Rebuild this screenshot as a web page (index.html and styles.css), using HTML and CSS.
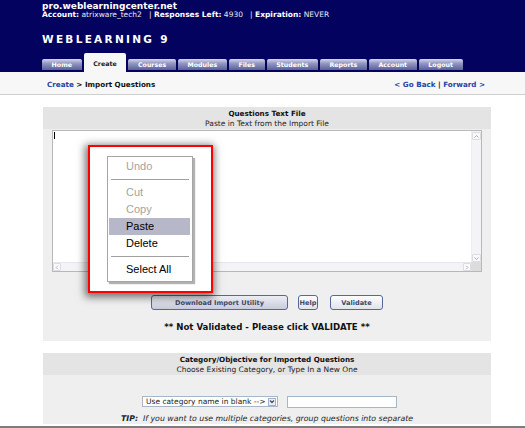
FILE: index.html
```html
<!DOCTYPE html>
<html lang="en">
<head>
<meta charset="utf-8">
<title>WebLearning 9 - Import Questions</title>
<link rel="stylesheet" href="styles.css">
</head>
<body>
<div class="window">
  <div class="page">
    <header class="masthead">
      <div class="host">pro.weblearningcenter.net</div>
      <div class="account"><b>Account:</b> atrixware_tech2 &nbsp; <span class="pipe">|</span> <b>Responses Left:</b> 4930 &nbsp; <span class="pipe">|</span> <b>Expiration:</b> NEVER</div>
      <div class="brand">WEBLEARNING 9</div>
      <nav class="tabs">
        <a class="tab">Home</a>
        <a class="tab active">Create</a>
        <a class="tab">Courses</a>
        <a class="tab">Modules</a>
        <a class="tab">Files</a>
        <a class="tab">Students</a>
        <a class="tab">Reports</a>
        <a class="tab">Account</a>
        <a class="tab">Logout</a>
      </nav>
    </header>

    <div class="crumbs">
      <div class="trail"><a class="link">Create</a> &gt; Import Questions</div>
      <div class="history"><a class="link">&lt; Go Back</a> | <a class="link">Forward &gt;</a></div>
    </div>

    <section class="panel">
      <div class="panel-head">
        <div class="panel-title">Questions Text File</div>
        <div class="panel-sub">Paste in Text from the Import File</div>
      </div>
      <div class="textbox">
        <div class="textbox-main">
          <div class="text-area"><span class="caret"></span></div>
          <div class="vscroll">
            <span class="sbtn"><svg width="7" height="7" viewBox="0 0 7 7"><polyline points="1.5,4.5 3.5,2.5 5.5,4.5" fill="none" stroke="#a9a9b6" stroke-width="1"/></svg></span>
            <span class="strack"></span>
            <span class="sbtn"><svg width="7" height="7" viewBox="0 0 7 7"><polyline points="1.5,2.5 3.5,4.5 5.5,2.5" fill="none" stroke="#a9a9b6" stroke-width="1"/></svg></span>
          </div>
        </div>
        <div class="hscroll-row">
          <div class="hscroll">
            <span class="sbtn"><svg width="7" height="7" viewBox="0 0 7 7"><polyline points="4.5,1.5 2.5,3.5 4.5,5.5" fill="none" stroke="#a9a9b6" stroke-width="1"/></svg></span>
            <span class="strack"></span>
            <span class="sbtn"><svg width="7" height="7" viewBox="0 0 7 7"><polyline points="2.5,1.5 4.5,3.5 2.5,5.5" fill="none" stroke="#a9a9b6" stroke-width="1"/></svg></span>
          </div>
          <div class="corner"></div>
        </div>
      </div>
      <div class="actions">
        <button class="btn btn-dl" type="button">Download Import Utility</button>
        <button class="btn btn-help" type="button">Help</button>
        <button class="btn btn-val" type="button">Validate</button>
      </div>
      <div class="status">** Not Validated - Please click VALIDATE **</div>
    </section>

    <section class="panel panel-cat">
      <div class="panel-head">
        <div class="panel-title">Category/Objective for Imported Questions</div>
        <div class="panel-sub">Choose Existing Category, or Type In a New One</div>
      </div>
      <div class="cat-row">
        <div class="select">
          <span class="select-text">Use category name in blank --&gt;</span>
          <span class="select-arrow"><svg width="6" height="5" viewBox="0 0 6 5"><polyline points="1,1.5 3,3.5 5,1.5" fill="none" stroke="#44506e" stroke-width="1.3"/></svg></span>
        </div>
        <input class="cat-input" type="text">
      </div>
      <div class="tip"><b>TIP:</b>&nbsp; If you want to use multiple categories, group questions into separate</div>
    </section>

    <div class="ctx-frame">
      <ul class="ctx-menu">
        <li class="ctx-item disabled">Undo</li>
        <li class="ctx-sep"></li>
        <li class="ctx-item disabled">Cut</li>
        <li class="ctx-item disabled">Copy</li>
        <li class="ctx-item hl">Paste</li>
        <li class="ctx-item">Delete</li>
        <li class="ctx-sep"></li>
        <li class="ctx-item">Select All</li>
      </ul>
    </div>
  </div>
  <div class="frame-edge"></div>
</div>
</body>
</html>
```

FILE: styles.css
```css
* { box-sizing: border-box; }

html, body {
  margin: 0;
  padding: 0;
}

body {
  width: 525px;
  height: 428px;
  overflow: hidden;
  background: #ffffff;
  font-family: "DejaVu Sans", Verdana, sans-serif;
  color: #111111;
}

.window {
  height: 428px;
  display: flex;
  flex-direction: column;
}

.page {
  position: relative;
  flex: 1;
  overflow: hidden;
}

.frame-edge {
  height: 2px;
  background: #7c7c7c;
}

/* ---------- masthead ---------- */
.masthead {
  background: #03035f;
  height: 72px;
  padding: 2px 0 0 42px;
  color: #ffffff;
  display: flex;
  flex-direction: column;
}

.host {
  font-size: 9px;
  font-weight: bold;
  line-height: 8.5px;
}

.account {
  font-size: 7.5px;
  line-height: 8.5px;
  color: #e8e8f4;
}

.account b {
  color: #ffffff;
}

.brand {
  margin-top: 14px;
  font-size: 10.5px;
  font-weight: bold;
  letter-spacing: 2.3px;
  line-height: 12px;
}

.tabs {
  margin-top: auto;
  display: flex;
  align-items: flex-end;
  gap: 2px;
}

.tab {
  height: 11px;
  margin-bottom: 2px;
  padding: 1px 9.6px 0;
  font-size: 6.3px;
  font-weight: bold;
  line-height: 10px;
  color: #ffffff;
  background: linear-gradient(#d3d6ea, #9297c4 40%, #5a5f9a);
  border-radius: 2px 2px 0 0;
  text-align: center;
  white-space: nowrap;
}

.tab.active {
  height: 19px;
  margin-bottom: 0;
  padding-top: 5px;
  line-height: 11px;
  background: #f7f7f7;
  color: #222222;
}

/* ---------- breadcrumbs ---------- */
.crumbs {
  height: 23px;
  background: #f7f7f7;
  border-bottom: 1px solid #cfcfcf;
  display: flex;
  justify-content: space-between;
  align-items: center;
  padding: 2px 40px 0 47px;
  font-size: 7.2px;
  font-weight: bold;
}

.link {
  color: #2544a8;
  text-decoration: none;
}

/* ---------- panels ---------- */
.panel {
  margin: 12px 34px 0 43px;
  background: #efefef;
}

.panel-head {
  background: #e4e4e4;
  padding: 2px 0 1px;
  text-align: center;
  font-size: 7.2px;
  line-height: 9.5px;
}

.panel-title {
  font-weight: bold;
}

.panel-sub {
  font-size: 7.5px;
  color: #222222;
}

.textbox {
  margin: 1px 9px 0;
  height: 142px;
  border: 1px solid #b8b8b8;
  background: #ffffff;
  display: flex;
  flex-direction: column;
}

.textbox-main {
  flex: 1;
  display: flex;
}

.text-area {
  flex: 1;
}

.caret {
  display: block;
  width: 1px;
  height: 7px;
  margin: 1px 0 0 1px;
  background: #000000;
}

.vscroll {
  width: 10px;
  display: flex;
  flex-direction: column;
  background: #f4f4f8;
  border-left: 1px solid #ececf1;
  padding-top: 1px;
}

.hscroll-row {
  height: 9px;
  display: flex;
}

.hscroll {
  flex: 1;
  display: flex;
  background: #f4f4f8;
  border-top: 1px solid #e6e6ec;
}

.corner {
  width: 10px;
  background: #dcdcdc;
}

.sbtn {
  width: 9px;
  height: 8px;
  border: 1px solid #dcdce4;
  border-radius: 1px;
  background: #f9f9fb;
  display: flex;
  align-items: center;
  justify-content: center;
}

.hscroll .sbtn {
  width: 8px;
  height: 8px;
}

.strack {
  flex: 1;
}

.actions {
  display: flex;
  justify-content: center;
  gap: 10px;
  margin-top: 23px;
}

.btn {
  height: 15px;
  padding: 0;
  font-family: "DejaVu Sans", Verdana, sans-serif;
  font-size: 6.6px;
  font-weight: bold;
  color: #3f4a66;
  border: 1px solid #55689a;
  border-radius: 3px;
  background: linear-gradient(#fdfdfe, #e1e3ec);
}

.btn-dl {
  width: 137px;
  background: linear-gradient(#ecedf4, #c8cbdc);
}

.btn-help {
  width: 20px;
}

.btn-val {
  width: 53px;
  margin-left: 2px;
}

.status {
  text-align: center;
  font-weight: bold;
  font-size: 8.6px;
  line-height: 12px;
  margin-top: 11px;
  padding-bottom: 8px;
}

.cat-row {
  display: flex;
  justify-content: center;
  gap: 9px;
  margin-top: 21px;
  padding-left: 5px;
}

.select {
  width: 136px;
  height: 11px;
  border: 1px solid #a9b6c8;
  background: #ffffff;
  display: flex;
  align-items: center;
  justify-content: space-between;
  padding: 0 1px 0 3px;
  font-size: 7.5px;
  color: #222222;
}

.select-arrow {
  width: 8px;
  height: 8px;
  border: 1px solid #9fb0c8;
  background: #eef0f6;
  display: flex;
  align-items: center;
  justify-content: center;
}

.cat-input {
  width: 110px;
  height: 12px;
  margin: 0;
  padding: 0;
  border: 1px solid #a9b6c8;
  background: #ffffff;
}

.tip {
  text-align: center;
  font-style: italic;
  font-size: 7.8px;
  line-height: 11px;
  margin-top: 5px;
  color: #222222;
  white-space: nowrap;
}

/* ---------- context menu overlay ---------- */
.ctx-frame {
  position: absolute;
  left: 88px;
  top: 145px;
  width: 125px;
  height: 148px;
  border: 2px solid #ff0000;
  background: #ffffff;
  box-shadow: -1px 2px 8px 2px rgba(0, 0, 0, 0.55);
  padding: 9px 0 0 17px;
}

.ctx-menu {
  list-style: none;
  margin: 0;
  width: 86px;
  padding: 1px 0 3px;
  border: 1px solid #a6a6a6;
  background: #ffffff;
  box-shadow: 2px 2px 1px rgba(0, 0, 0, 0.3);
  font-family: "Liberation Sans", Tahoma, sans-serif;
  font-size: 11px;
}

.ctx-item {
  height: 17px;
  line-height: 17px;
  padding-left: 17px;
  margin: 0 2px 0 1px;
  color: #000000;
}

.ctx-item.disabled {
  color: #a3a3a3;
}

.ctx-item.hl {
  background: #b7b7ca;
}

.ctx-sep {
  height: 1px;
  margin: 4px 3px;
  background: #a0a0a0;
}
```
